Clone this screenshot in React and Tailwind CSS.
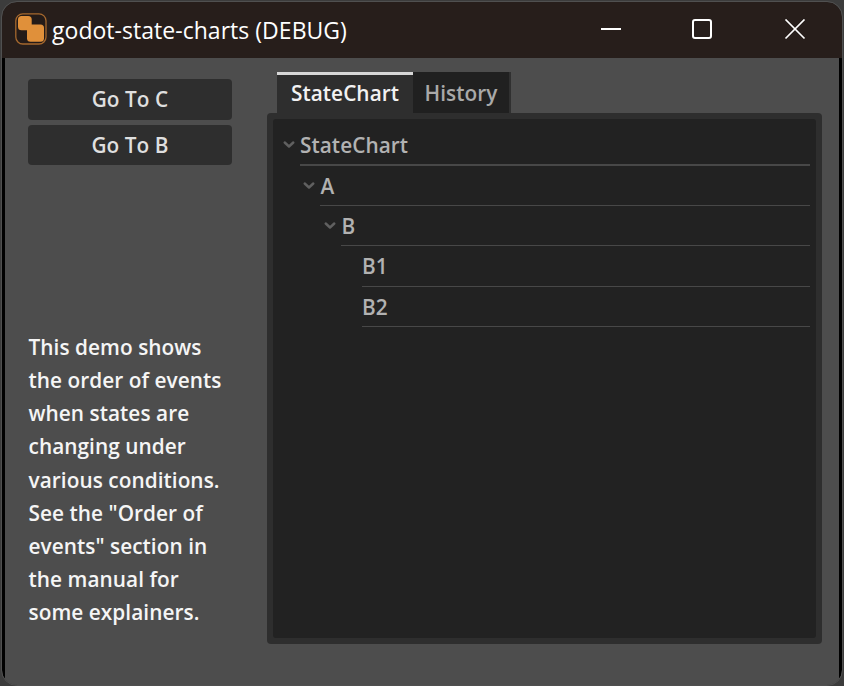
import React from "react";

const description = [
  "This demo shows",
  "the order of events",
  "when states are",
  "changing under",
  "various conditions.",
  'See the "Order of',
  'events" section in',
  "the manual for",
  "some explainers.",
];

function AppIcon() {
  return (
    <svg className="mt-[11px] ml-[13px] h-8 w-8 shrink-0" viewBox="0 0 32 32">
      <rect x="0.8" y="0.8" width="30.2" height="30.2" rx="7" fill="#241b18" stroke="#a5682e" strokeWidth="1.3" />
      <rect x="3" y="3" width="13.7" height="14.2" rx="3.5" fill="#e0903a" />
      <rect x="12" y="11.500" width="17" height="17.300" rx="3.5" fill="#e0903a" />
    </svg>
  );
}

function TitleBar() {
  return (
    <header className="flex h-14 shrink-0 bg-[#271e1b] text-white">
      <AppIcon />
      <h1 className="ml-[5px] flex-1 whitespace-nowrap font-['Open_Sans',sans-serif] text-[23px] font-normal leading-[57px] tracking-[0.03px]">
        godot-state-charts (DEBUG)
      </h1>
      <svg className="mt-[17px] mr-[35px] h-[22px] w-[206px] shrink-0" viewBox="0 0 206 22" fill="none" stroke="#fff">
        <path d="M0 10H20" strokeWidth="2" />
        <rect x="92" y="1" width="18" height="18" rx="2" strokeWidth="2" />
        <path d="M184.5 0.5L203.500 19.500M203.500 0.500L184.500 19.500" strokeWidth="1.7" />
      </svg>
    </header>
  );
}

function Button({ children }) {
  return (
    <button className="h-[40.500px] w-full rounded-[4px] bg-[#2e2e2e] text-center leading-[40px] text-[#dfdfdf]">
      {children}
    </button>
  );
}

function Chevron() {
  return (
    <svg className="h-3 w-3 shrink-0" viewBox="0 0 12 12" fill="none" stroke="#606060" strokeWidth="2.4" strokeLinecap="round" strokeLinejoin="round">
      <path d="M1.700 3.500L6 7.500L10.300 3.500" />
    </svg>
  );
}

function Row({ label, indent, open, line }) {
  return (
    <div className={`flex h-[40.400px] items-stretch ${indent}`}>
      <div className="flex w-[17px] shrink-0 items-center">{open && <Chevron />}</div>
      <div className={`flex-1 leading-[41px] ${line}`}>{label}</div>
    </div>
  );
}

export default function App() {
  return (
    <div className="h-[686px] w-[844px] overflow-hidden bg-[#3c3c3c] p-[2px] font-['Open_Sans',sans-serif] text-[20.800px] font-semibold">
      <div className="flex h-[683px] flex-col overflow-hidden rounded-[15px] outline-1 outline-[#505050]">
        <TitleBar />
        <main className="flex flex-1 border-x-[3px] border-black bg-[#4d4d4d] tracking-[0.050px]">
          <aside className="ml-[23px] w-[204px] shrink-0 pt-[21px]">
            <div className="flex flex-col gap-[5px]">
              <Button>Go To C</Button>
              <Button>Go To B</Button>
            </div>
            <p className="mt-[166px] ml-[0.500px] whitespace-nowrap leading-[33.125px] text-[#f5f5f5]">
              {description.map((text) => (
                <span className="block" key={text}>{text}</span>
              ))}
            </p>
          </aside>
          <section className="mt-[14px] ml-[35px] flex h-[572px] w-[555px] flex-col">
            <nav className="ml-[10px] flex h-[41px] shrink-0 leading-[42px]">
              <div className="w-[136px] border-t-[3px] border-[#d7d7d7] bg-[#2e2e2e] text-center leading-[36px] text-[#f2f2f2]">
                StateChart
              </div>
              <div className="w-[98px] border-r-2 border-[#303030] bg-[#202020] text-center text-[#a9a9a9]">
                History
              </div>
            </nav>
            <div className="flex-1 rounded-[4px] bg-[#2e2e2e] p-[6px]">
              <div className="h-full rounded-[3px] bg-[#222] pt-[6.300px] pr-[6px] pl-[10px] text-[#b2b2b2]">
                <Row label="StateChart" indent="pl-0" open line="border-b-2 border-[#484848]" />
                <Row label="A" indent="pl-[20.400px]" open line="border-b border-[#484848]" />
                <Row label="B" indent="pl-[41.400px]" open line="border-b border-[#484848]" />
                <Row label="B1" indent="pl-[62px]" line="border-b border-[#484848]" />
                <Row label="B2" indent="pl-[62px]" line="border-b border-[#484848]" />
              </div>
            </div>
          </section>
        </main>
      </div>
    </div>
  );
}
